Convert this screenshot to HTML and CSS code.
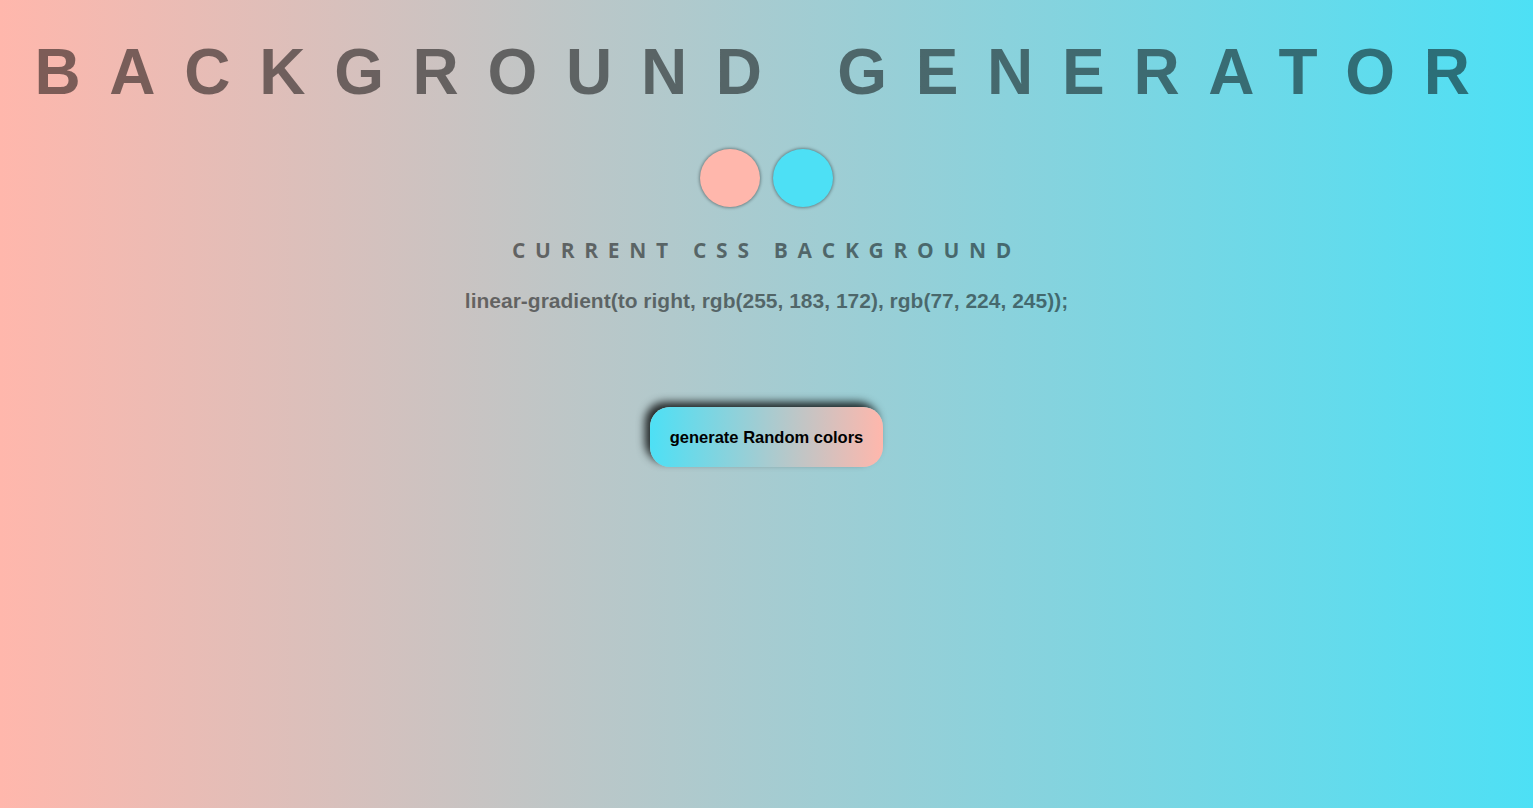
FILE: index.html
```html
<!DOCTYPE html>
<html>
<head>
<meta charset="utf-8">
<title>Background Generator</title>
<link rel="stylesheet" href="styles.css">
</head>
<body>
<main class="page">
  <h1 class="title">Background Generator</h1>
  <div class="swatches">
    <span class="swatch swatch-pink"></span>
    <span class="swatch swatch-cyan"></span>
  </div>
  <h2 class="subtitle">Current CSS Background</h2>
  <h3 class="css-value">linear-gradient(to right, rgb(255, 183, 172), rgb(77, 224, 245));</h3>
  <button class="random-btn">generate Random colors</button>
</main>
</body>
</html>
```

FILE: styles.css
```css
html, body {
  margin: 0;
  height: 100%;
}
body {
  background: linear-gradient(to right, rgb(255, 183, 172), rgb(77, 224, 245));
  font-family: "Liberation Sans", Arial, sans-serif;
}
.page {
  display: flex;
  flex-direction: column;
  align-items: center;
  padding: 40px 8px 0;
  text-align: center;
}
.title {
  margin: 0;
  font-family: "Liberation Sans", Arial, sans-serif;
  font-weight: 700;
  font-size: 64px;
  line-height: 64px;
  letter-spacing: 28.7px;
  text-transform: uppercase;
  color: rgba(0, 0, 0, 0.5);
  white-space: nowrap;
}
.swatches {
  display: flex;
  gap: 13px;
  margin-top: 45px;
}
.swatch {
  display: block;
  width: 60px;
  height: 58px;
  border-radius: 50%;
  box-shadow: 0 0 3px 1px rgba(0, 0, 0, 0.35);
}
.swatch-pink { background: rgb(255, 183, 172); }
.swatch-cyan { background: rgb(77, 224, 245); }
.subtitle {
  margin: 31px 0 0;
  font-family: "Open Sans", sans-serif;
  font-weight: 700;
  font-size: 21px;
  line-height: 24px;
  letter-spacing: 9.7px;
  text-transform: uppercase;
  color: rgba(0, 0, 0, 0.5);
}
.css-value {
  margin: 28px 0 0;
  font-family: "Liberation Sans", Arial, sans-serif;
  font-weight: 700;
  font-size: 21px;
  line-height: 22px;
  color: rgba(0, 0, 0, 0.5);
}
.random-btn {
  margin-top: 95px;
  width: 233px;
  height: 60px;
  border: none;
  border-radius: 20px;
  background: linear-gradient(to right, rgb(77, 224, 245), rgb(255, 183, 172));
  box-shadow: -5px -5px 8px rgba(0, 0, 0, 0.8);
  font-family: "Liberation Sans", Arial, sans-serif;
  font-weight: 700;
  font-size: 16.5px;
  color: #000;
  cursor: pointer;
}
```
